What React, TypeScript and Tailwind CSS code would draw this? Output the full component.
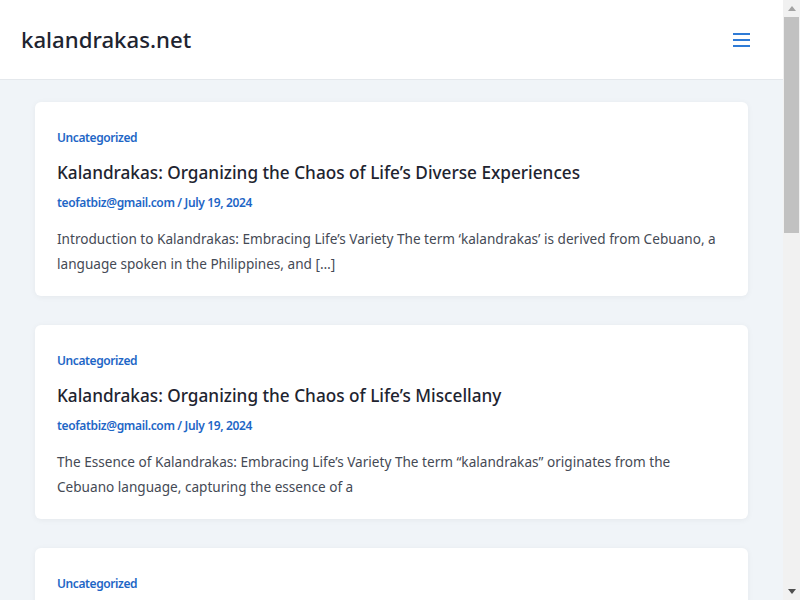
import React from 'react'

type Post = {
  category: string
  title: string
  author: string
  date: string
  excerpt: string
}

const posts: Post[] = [
  {
    category: 'Uncategorized',
    title: 'Kalandrakas: Organizing the Chaos of Life’s Diverse Experiences',
    author: 'teofatbiz@gmail.com',
    date: 'July 19, 2024',
    excerpt:
      'Introduction to Kalandrakas: Embracing Life’s Variety The term ‘kalandrakas’ is derived from Cebuano, a language spoken in the Philippines, and […]',
  },
  {
    category: 'Uncategorized',
    title: 'Kalandrakas: Organizing the Chaos of Life’s Miscellany',
    author: 'teofatbiz@gmail.com',
    date: 'July 19, 2024',
    excerpt:
      'The Essence of Kalandrakas: Embracing Life’s Variety The term “kalandrakas” originates from the Cebuano language, capturing the essence of a',
  },
  {
    category: 'Uncategorized',
    title: 'Kalandrakas: Sorting Through the Odds and Ends of Everyday Life',
    author: 'teofatbiz@gmail.com',
    date: 'July 19, 2024',
    excerpt:
      'Understanding Kalandrakas The term kalandrakas refers to a collection of miscellaneous items, often seen as odds and ends, and […]',
  },
]

const PostCard = ({ post }: { post: Post }) => {
  return (
    <article className="bg-white rounded-md shadow-[0_1px_6px_rgba(0,0,0,0.05)] px-[22px] pt-[25px] pb-[20px]">
      <a className="block text-[12px] font-semibold tracking-[-0.4px] text-[#1e66c6] leading-[22px]">
        {post.category}
      </a>
      <h2 className="mt-[11px] text-[17.2px] font-medium text-[#1e2430] leading-[25px]">{post.title}</h2>
      <div className="mt-[8px] text-[12px] font-semibold tracking-[-0.35px] text-[#1e66c6] leading-[20px]">
        {post.author} / {post.date}
      </div>
      <p className="mt-[13px] text-[13.6px] text-[#454a55] leading-[25px]">{post.excerpt}</p>
    </article>
  )
}

const Scrollbar = () => {
  return (
    <div className="w-[17px] shrink-0 bg-[#f1f1f1] flex flex-col">
      <div className="h-[17px] flex items-center justify-center">
        <svg width="8" height="5" viewBox="0 0 8 5">
          <path d="M4 0 L8 5 L0 5 Z" fill="#a3a3a3" />
        </svg>
      </div>
      <div className="flex-1 px-[1px]">
        <div className="h-[216px] bg-[#c1c1c1]" />
      </div>
      <div className="h-[17px] flex items-center justify-center">
        <svg width="8" height="5" viewBox="0 0 8 5">
          <path d="M0 0 L8 0 L4 5 Z" fill="#505050" />
        </svg>
      </div>
    </div>
  )
}

export default function App() {
  return (
    <div className="h-screen flex overflow-hidden font-['Noto_Sans',sans-serif]">
      <div className="flex-1 min-w-0 bg-[#f0f4f8] overflow-hidden">
        <header className="h-[80px] bg-white border-b border-[#e4e8ec] flex items-center justify-between pl-[21px] pr-[33px]">
          <div className="text-[22.2px] font-medium text-[#1e2430]">kalandrakas.net</div>
          <button className="text-[#2f7bd6]">
            <svg width="17" height="14" viewBox="0 0 17 14" fill="currentColor">
              <rect x="0" y="0" width="17" height="2" />
              <rect x="0" y="6" width="17" height="2" />
              <rect x="0" y="12" width="17" height="2" />
            </svg>
          </button>
        </header>
        <main className="px-[35px] pt-[22px] pb-[40px] flex flex-col gap-[29px]">
          {posts.map((p, i) => (
            <PostCard key={i} post={p} />
          ))}
        </main>
      </div>
      <Scrollbar />
    </div>
  )
}
